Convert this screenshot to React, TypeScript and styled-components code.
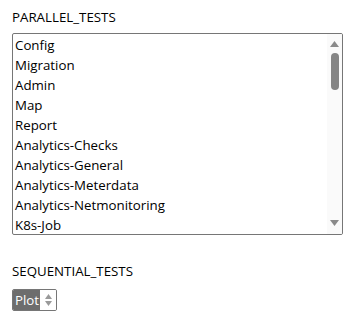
import React from "react";
import styled, { createGlobalStyle } from "styled-components";

const Global = createGlobalStyle`
  html, body { margin: 0; padding: 0; background: #fff; }
  body { font-family: "Open Sans", "Noto Sans", sans-serif; color: #000; }
`;

const Page = styled.div`
  padding: 8px 12px 0 12px;
  display: flex;
  flex-direction: column;
`;

const Label = styled.div<{ $top: number }>`
  font-size: 13.3px;
  line-height: 18px;
  margin-top: ${(p) => p.$top}px;
  color: #000;
`;

const ListBox = styled.div`
  margin-top: 7px;
  width: 331px;
  height: 202px;
  box-sizing: border-box;
  border: 1px solid #767676;
  border-radius: 2px;
  background: #fff;
  display: flex;
  overflow: hidden;
`;

const Items = styled.div`
  flex: 1;
  padding: 1px 0 0 2px;
  display: flex;
  flex-direction: column;
`;

const Item = styled.div`
  height: 20px;
  line-height: 20px;
  font-size: 13.3px;
  white-space: nowrap;
`;

const ScrollTrack = styled.div`
  width: 15px;
  background: #fafafa;
  display: flex;
  flex-direction: column;
  align-items: center;
  padding: 7px 0 8px;
  box-sizing: border-box;
`;

const Thumb = styled.div`
  width: 8px;
  height: 37px;
  border-radius: 4px;
  background: #858585;
  margin-top: 6px;
`;

const Spacer = styled.div`
  flex: 1;
`;

const Arrow = ({ up }: { up?: boolean }) => (
  <svg width="9" height="6" viewBox="0 0 9 6">
    <path d={up ? "M0 6 L4.5 0 L9 6 Z" : "M0 0 L4.5 6 L9 0 Z"} fill="#8a8a8a" />
  </svg>
);

const Select = styled.div`
  margin-top: 9px;
  width: 45px;
  height: 22px;
  box-sizing: border-box;
  border: 1px solid #767676;
  border-radius: 2px;
  display: flex;
  overflow: hidden;
`;

const Selected = styled.div`
  background: #6d6d6d;
  color: #fff;
  font-size: 13.3px;
  line-height: 20px;
  padding-left: 2px;
  width: 27px;
  box-sizing: border-box;
  white-space: nowrap;
`;

const Spin = styled.div`
  flex: 1;
  background: #fff;
  display: flex;
  flex-direction: column;
  align-items: center;
  justify-content: center;
  gap: 2px;
`;

const SmallArrow = ({ up }: { up?: boolean }) => (
  <svg width="7" height="5" viewBox="0 0 7 5">
    <path d={up ? "M0 5 L3.5 0 L7 5 Z" : "M0 0 L3.5 5 L7 0 Z"} fill="#9a9a9a" />
  </svg>
);

const items = [
  "Config",
  "Migration",
  "Admin",
  "Map",
  "Report",
  "Analytics-Checks",
  "Analytics-General",
  "Analytics-Meterdata",
  "Analytics-Netmonitoring",
  "K8s-Job",
];

export default function App() {
  return (
    <>
      <Global />
      <Page>
        <Label $top={0}>PARALLEL_TESTS</Label>
        <ListBox>
          <Items>
            {items.map((i) => (
              <Item key={i}>{i}</Item>
            ))}
          </Items>
          <ScrollTrack>
            <Arrow up />
            <Thumb />
            <Spacer />
            <Arrow />
          </ScrollTrack>
        </ListBox>
        <Label $top={27}>SEQUENTIAL_TESTS</Label>
        <Select>
          <Selected>Plot</Selected>
          <Spin>
            <SmallArrow up />
            <SmallArrow />
          </Spin>
        </Select>
      </Page>
    </>
  );
}
